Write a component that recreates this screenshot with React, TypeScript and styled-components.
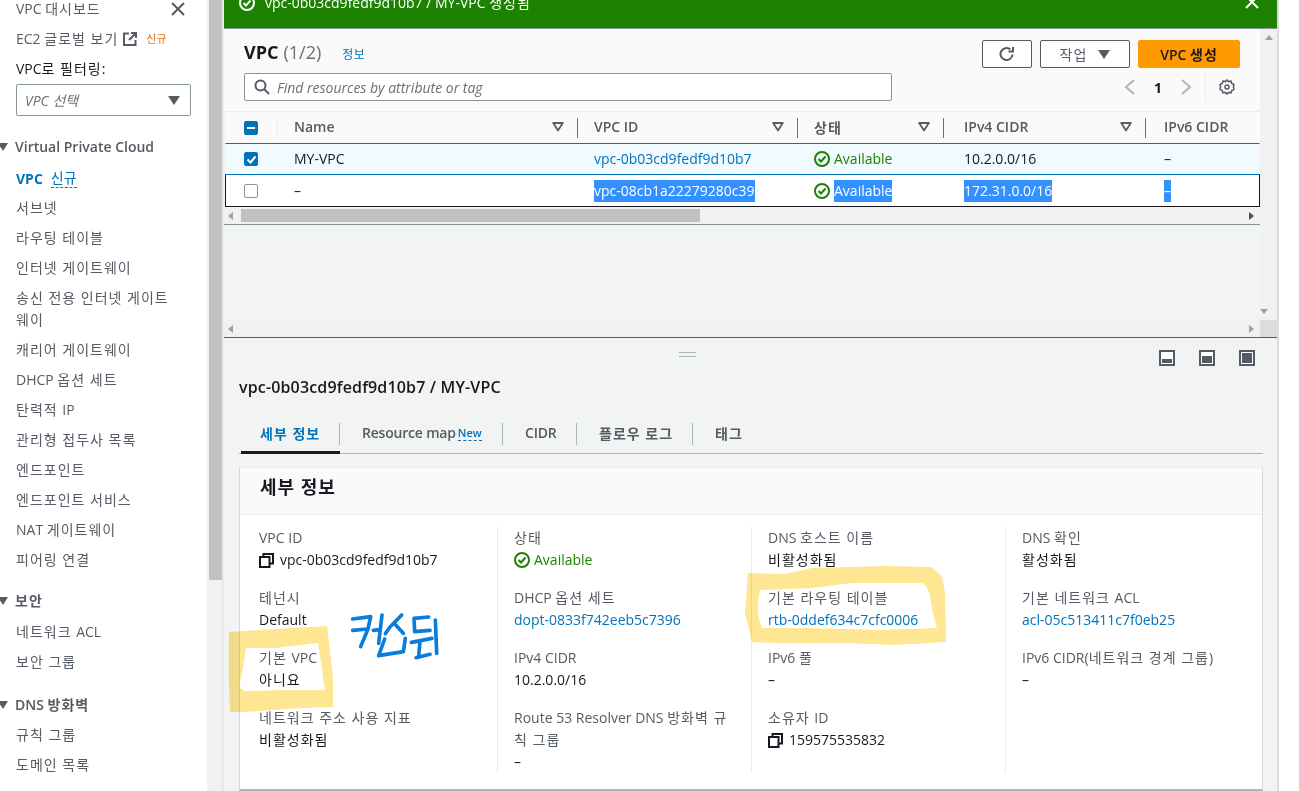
import React from "react";
import styled, { createGlobalStyle } from "styled-components";

const Global = createGlobalStyle`
  html, body { margin: 0; padding: 0; background: #fff; }
  body { font-family: "Open Sans", "Noto Sans CJK KR", sans-serif; font-size: 14px; color: #16191f; }
  * { box-sizing: border-box; }
`;

const Ko = styled.span`
  letter-spacing: 1px;
`;
const T = ({ children }: { children: string }) => (
  <>
    {children.split(/([가-힣][가-힣 ]*)/).map((part, i) =>
      i % 2 === 1 ? <Ko key={i}>{part}</Ko> : part
    )}
  </>
);

const Page = styled.div`
  position: relative;
  display: flex;
  width: 1299px;
  height: 791px;
  overflow: hidden;
  background: #fff;
`;

/* ---------- sidebar ---------- */
const Sidebar = styled.nav`
  width: 207px;
  flex: none;
  padding: 0 0 0 16px;
  margin-top: -6px;
  color: #545b64;
`;
const NavRow = styled.div<{ $mt?: number }>`
  display: flex;
  align-items: center;
  height: 30px;
  margin-top: ${(p) => p.$mt ?? 0}px;
  line-height: 22px;
  white-space: pre;
`;
const DashRow = styled(NavRow)`
  justify-content: space-between;
  padding-right: 21px;
`;
const FilterLabel = styled(NavRow)`
  color: #16191f;
`;
const NewTag = styled.span`
  margin-left: 9px;
  font-size: 11px;
  color: #ec7211;
`;
const Wrapped = styled.div`
  width: 160px;
  padding: 4px 0;
  line-height: 22px;
`;
const Select = styled.div`
  display: flex;
  align-items: center;
  justify-content: space-between;
  width: 175px;
  height: 32px;
  padding: 0 10px 0 8px;
  border: 1px solid #879596;
  border-radius: 2px;
  font-style: italic;
  color: #687078;
`;
const Section = styled(NavRow)`
  margin-left: -1px;
  font-weight: 600;
  position: relative;
`;
const SectionArrow = styled.svg`
  position: absolute;
  left: -17px;
  top: 11px;
`;
const ActiveNav = styled(NavRow)`
  height: 29px;
  color: #0073bb;
  font-weight: 700;
`;
const NewLink = styled.span`
  margin-left: 8px;
  font-weight: 400;
  line-height: 18px;
  border-bottom: 1px dashed #0073bb;
`;
const SideScroll = styled.div`
  width: 15px;
  flex: none;
  padding-left: 2px;
  background: #f1f1f1;
`;
const SideThumb = styled.div`
  height: 580px;
  background: #c1c1c1;
`;
const Gutter = styled.div`
  width: 2px;
  flex: none;
  background: #e8e8e8;
`;

/* ---------- main ---------- */
const Main = styled.main`
  width: 1053px;
  flex: none;
  display: flex;
  flex-direction: column;
  background: #f2f3f3;
`;
const RightStrip = styled.div`
  flex: 1;
  background: #fff;
  border-left: 2px solid #d9dddd;
`;
const Banner = styled.div`
  flex: none;
  height: 29px;
  display: flex;
  justify-content: space-between;
  padding: 0 18px 0 15px;
  background: #1d8102;
  border-bottom: 1px solid #879596;
  color: #fff;
`;
const BannerText = styled.div`
  display: flex;
  align-items: center;
  gap: 10px;
  height: 22px;
  margin-top: -8px;
  line-height: 22px;
  white-space: pre;
`;
const BannerClose = styled.svg`
  margin-top: -5px;
`;
const TopPane = styled.section`
  flex: none;
  height: 309px;
  display: flex;
  border-bottom: 1px solid #545b64;
`;
const TopScrollArea = styled.div`
  flex: 1;
  min-width: 0;
  display: flex;
  flex-direction: column;
`;
const VScroll = styled.div`
  width: 17px;
  flex: none;
  display: flex;
  flex-direction: column;
  justify-content: space-between;
  align-items: center;
  background: #f1f1f1;
`;
const VArrowBox = styled.div`
  height: 17px;
  display: flex;
  align-items: center;
`;
const Corner = styled.div`
  height: 17px;
  width: 17px;
  background: #dcdcdc;
`;
const Header = styled.header`
  flex: none;
  height: 83px;
  padding: 11px 20px 0 20px;
  background: #fafafa;
  border-bottom: 1px solid #eaeded;
`;
const TitleRow = styled.div`
  display: flex;
  justify-content: space-between;
  align-items: center;
  height: 28px;
`;
const Title = styled.div`
  display: flex;
  align-items: baseline;
  margin-top: -5px;
  font-size: 18px;
  font-weight: 700;
`;
const Count = styled.span`
  margin-left: 5px;
  font-weight: 400;
  color: #687078;
`;
const InfoLink = styled.a`
  margin-left: 21px;
  font-size: 12px;
  font-weight: 400;
  letter-spacing: 0.5px;
  color: #0073bb;
`;
const Buttons = styled.div`
  display: flex;
  gap: 8px;
`;
const Button = styled.div<{ $w: number; $primary?: boolean }>`
  display: flex;
  align-items: center;
  justify-content: center;
  gap: 11px;
  width: ${(p) => p.$w}px;
  height: 28px;
  border: 1px solid ${(p) => (p.$primary ? "#ff9900" : "#545b64")};
  border-radius: 2px;
  background: ${(p) => (p.$primary ? "#ff9900" : "#fff")};
  color: ${(p) => (p.$primary ? "#16191f" : "#545b64")};
  font-weight: ${(p) => (p.$primary ? 600 : 400)};
  white-space: pre;
`;
const SearchRow = styled.div`
  display: flex;
  justify-content: space-between;
  align-items: center;
  height: 28px;
  margin-top: 5px;
`;
const Search = styled.div`
  display: flex;
  align-items: center;
  gap: 7px;
  width: 648px;
  height: 28px;
  padding-left: 9px;
  background: #fff;
  border: 1px solid #879596;
  border-radius: 2px;
  font-style: italic;
  color: #687078;
`;
const Pager = styled.div`
  display: flex;
  align-items: center;
  margin-right: 5px;
  height: 28px;
`;
const PagerNum = styled.span`
  width: 44px;
  text-align: center;
  font-weight: 700;
  color: #16191f;
`;
const PagerDivider = styled.div`
  width: 1px;
  height: 28px;
  margin: 0 13px 0 13px;
  background: #eaeded;
`;
const Table = styled.div`
  flex: none;
  margin-left: 1px;
`;
const HeadRow = styled.div`
  display: grid;
  grid-template-columns: 53px 300px 220px 146px 202px 1fr;
  height: 31px;
  background: #fafafa;
`;
const HeadCell = styled.div<{ $pad?: number; $noSep?: boolean }>`
  position: relative;
  display: flex;
  align-items: center;
  justify-content: space-between;
  padding: 0 14px 2px ${(p) => p.$pad ?? 16}px;
  font-weight: 600;
  color: #545b64;
  white-space: nowrap;
  &::after {
    content: "";
    display: ${(p) => (p.$noSep ? "none" : "block")};
    position: absolute;
    right: 0;
    top: 6px;
    height: 20px;
    width: 1px;
    background: #687078;
  }
`;
const CheckHead = styled.div`
  position: relative;
  display: flex;
  align-items: center;
  padding-left: 19px;
  &::after {
    content: "";
    position: absolute;
    right: 0;
    top: 6px;
    height: 20px;
    width: 1px;
    background: #eaeded;
  }
`;
const BodyRow = styled.div<{ $selected?: boolean }>`
  display: grid;
  grid-template-columns: 52px 300px 220px 146px 202px 1fr;
  align-items: center;
  height: ${(p) => (p.$selected ? 32 : 33)}px;
  margin-top: ${(p) => (p.$selected ? 0 : -1)}px;
  background: ${(p) => (p.$selected ? "#f1faff" : "#fff")};
  border-top: 1px solid #0073bb;
  border-bottom: 1px solid ${(p) => (p.$selected ? "#0073bb" : "#16191f")};
  border-left: 1px solid ${(p) => (p.$selected ? "transparent" : "#16191f")};
  border-right: 1px solid ${(p) => (p.$selected ? "transparent" : "#16191f")};
  white-space: nowrap;
`;
const BodyCell = styled.div<{ $pad?: number; $link?: boolean }>`
  display: flex;
  align-items: center;
  padding-left: ${(p) => p.$pad ?? 16}px;
  line-height: 22px;
  color: ${(p) => (p.$link ? "#0073bb" : "#16191f")};
`;
const CheckCell = styled.div`
  padding-left: 18px;
  display: flex;
`;
const Selected = styled.span`
  display: inline-block;
  height: 22px;
  line-height: 22px;
  background: #3390ff;
  color: #fff;
`;
const StatusText = styled.span`
  margin-left: 4px;
  color: #1d8102;
`;
const Box = styled.div<{ $on?: boolean }>`
  width: 14px;
  height: 14px;
  border-radius: 2px;
  display: flex;
  align-items: center;
  justify-content: center;
  background: ${(p) => (p.$on ? "#0073bb" : "#fff")};
  border: 1px solid ${(p) => (p.$on ? "#0073bb" : "#879596")};
`;
const HScroll = styled.div`
  flex: none;
  display: flex;
  align-items: center;
  justify-content: space-between;
  height: 17px;
  padding: 0 6px 0 4px;
  background: #f1f1f1;
`;
const HThumbTrack = styled.div`
  flex: 1;
  padding: 0 0 0 8px;
`;
const HThumb = styled.div`
  width: 459px;
  height: 13px;
  background: #c1c1c1;
`;
const TableRule = styled.div`
  flex: none;
  height: 1px;
  background: #879596;
`;
const EmptySpace = styled.div`
  flex: 1;
`;

/* ---------- split panel ---------- */
const Split = styled.section`
  flex: 1;
  min-height: 0;
  padding: 0 14px 0 15px;
`;
const SplitTop = styled.div`
  display: flex;
  justify-content: space-between;
  align-items: center;
  height: 37px;
  padding: 2px 8px 0 440px;
`;
const Grip = styled.div`
  width: 17px;
  height: 5px;
  margin-top: -6px;
  border-top: 1px solid #aab7b8;
  border-bottom: 1px solid #aab7b8;
`;
const ViewIcons = styled.div`
  display: flex;
  gap: 24px;
`;
const PaneTitle = styled.h2`
  margin: 0;
  height: 24px;
  font-size: 16px;
  line-height: 24px;
  font-weight: 600;
  letter-spacing: 0.15px;
  color: #16191f;
`;
const Tabs = styled.div`
  display: flex;
  height: 33px;
  margin-top: 22px;
  padding-left: 2px;
  border-bottom: 1px solid #aab7b8;
`;
const Tab = styled.div<{ $w: number; $active?: boolean; $last?: boolean }>`
  position: relative;
  display: flex;
  align-items: center;
  width: ${(p) => p.$w}px;
  height: 33px;
  padding: 0 0 ${(p) => (p.$active ? 7 : 10)}px ${(p) => (p.$active ? 19 : 22)}px;
  font-weight: 600;
  letter-spacing: -0.2px;
  white-space: pre;
  color: ${(p) => (p.$active ? "#0073bb" : "#545b64")};
  border-bottom: ${(p) => (p.$active ? "3px solid #16191f" : "none")};
  &::after {
    content: "";
    display: ${(p) => (p.$last ? "none" : "block")};
    position: absolute;
    right: 0;
    top: 2px;
    height: 22px;
    width: 1px;
    background: #aab7b8;
  }
`;
const TabNew = styled.span`
  margin-left: 2px;
  font-size: 11px;
  letter-spacing: 0;
  color: #0073bb;
  line-height: 15px;
  border-bottom: 1px dashed #0073bb;
`;
const Card = styled.div`
  margin-top: 13px;
  height: 324px;
  background: #fff;
  border-top: 1px solid #eaeded;
  border-bottom: 2px solid #aab7b8;
  border-left: 1px solid #d5dbdb;
  border-right: 1px solid #d5dbdb;
`;
const CardHead = styled.div`
  display: flex;
  align-items: center;
  height: 47px;
  padding: 0 0 10px 20px;
  background: #fafafa;
  border-bottom: 1px solid #eaeded;
  font-size: 18px;
  font-weight: 700;
  white-space: pre;
`;
const CardGrid = styled.div`
  display: grid;
  grid-template-columns: 257px 254px 254px 1fr;
  margin-top: 12px;
`;
const Col = styled.div<{ $first?: boolean }>`
  height: 246px;
  padding: 0 20px 0 ${(p) => (p.$first ? 19 : 16)}px;
  border-left: ${(p) => (p.$first ? "none" : "1px solid #eaeded")};
`;
const Field = styled.div`
  margin-bottom: 16px;
  line-height: 22px;
`;
const Label = styled.div`
  color: #545b64;
`;
const Value = styled.div<{ $link?: boolean }>`
  display: flex;
  align-items: center;
  min-height: 22px;
  color: ${(p) => (p.$link ? "#0073bb" : "#16191f")};
`;
const CopyWrap = styled.span`
  display: inline-flex;
  margin-right: 6px;
`;
const Overlay = styled.svg`
  position: absolute;
  left: 0;
  top: 0;
  pointer-events: none;
  mix-blend-mode: multiply;
`;
const Scribble = styled.svg`
  position: absolute;
  left: 340px;
  top: 605px;
  pointer-events: none;
`;

/* ---------- icons ---------- */
const Tri = ({ c = "#545b64", w = 12 }: { c?: string; w?: number }) => (
  <svg width={w} height={(w * 2) / 3 + 1} viewBox="0 0 12 9"><path d="M0 0h12L6 9z" fill={c} /></svg>
);
const FilterIcon = () => (
  <svg width="12" height="10" viewBox="0 0 12 10" fill="none"><path d="M1.2 1h9.6L6 8.4z" stroke="#545b64" strokeWidth="1.8" strokeLinejoin="round" /></svg>
);
const Check = ({ c = "#1d8102" }: { c?: string }) => (
  <svg width="16" height="16" viewBox="0 0 16 16" fill="none" stroke={c} strokeWidth="2">
    <circle cx="8" cy="8" r="7" />
    <path d="M4.5 8l2.5 2.5 4.5-5" />
  </svg>
);
const Copy = () => (
  <svg width="15" height="15" viewBox="0 0 15 15" fill="none" stroke="#16191f" strokeWidth="2">
    <path d="M4.5 3.5V1h9.5v9.5h-3" />
    <rect x="1" y="4" width="9.5" height="10" />
  </svg>
);
const ViewIcon = ({ fill }: { fill: number }) => (
  <svg width="16" height="16" viewBox="0 0 16 16">
    <rect x="1" y="1" width="14" height="14" fill="#fff" stroke="#545b64" strokeWidth="2" />
    <rect x="3" y={13 - fill} width="10" height={fill} fill="#545b64" />
  </svg>
);
const SecArrow = () => (
  <SectionArrow width="10" height="8" viewBox="0 0 10 8"><path d="M0 0h10L5 8z" fill="#545b64" /></SectionArrow>
);

const navA = ["서브넷", "라우팅 테이블", "인터넷 게이트웨이"];
const navB = ["캐리어 게이트웨이", "DHCP 옵션 세트", "탄력적 IP", "관리형 접두사 목록", "엔드포인트", "엔드포인트 서비스", "NAT 게이트웨이", "피어링 연결"];

type F = { l: string; v: React.ReactNode; link?: boolean };
const cols: F[][] = [
  [
    { l: "VPC ID", v: <><CopyWrap><Copy /></CopyWrap>vpc-0b03cd9fedf9d10b7</> },
    { l: "테넌시", v: "Default" },
    { l: "기본 VPC", v: "아니요" },
    { l: "네트워크 주소 사용 지표", v: "비활성화됨" },
  ],
  [
    { l: "상태", v: <><Check /><StatusText>Available</StatusText></> },
    { l: "DHCP 옵션 세트", v: "dopt-0833f742eeb5c7396", link: true },
    { l: "IPv4 CIDR", v: "10.2.0.0/16" },
    { l: "Route 53 Resolver DNS 방화벽 규칙 그룹", v: "–" },
  ],
  [
    { l: "DNS 호스트 이름", v: "비활성화됨" },
    { l: "기본 라우팅 테이블", v: "rtb-0ddef634c7cfc0006", link: true },
    { l: "IPv6 풀", v: "–" },
    { l: "소유자 ID", v: <><CopyWrap><Copy /></CopyWrap>159575535832</> },
  ],
  [
    { l: "DNS 확인", v: "활성화됨" },
    { l: "기본 네트워크 ACL", v: "acl-05c513411c7f0eb25", link: true },
    { l: "IPv6 CIDR(네트워크 경계 그룹)", v: "–" },
  ],
];

export default function App() {
  return (
    <Page>
      <Global />
      <Sidebar>
        <DashRow>
          <span><T>VPC 대시보드</T></span>
          <svg width="16" height="16" viewBox="0 0 16 16" stroke="#545b64" strokeWidth="2"><path d="M2 2l12 12M14 2L2 14" /></svg>
        </DashRow>
        <NavRow>
          <T>EC2 글로벌 보기</T>
          <svg style={{ marginLeft: 5 }} width="14" height="14" viewBox="0 0 14 14" fill="none" stroke="#545b64" strokeWidth="2"><path d="M6 1.500H1v11.500h11.500V8M6 8l7-7M8 1h5v5" /></svg>
          <NewTag>신규</NewTag>
        </NavRow>
        <FilterLabel><T>VPC로 필터링:</T></FilterLabel>
        <Select>VPC 선택<Tri /></Select>
        <Section $mt={16}><SecArrow />Virtual Private Cloud</Section>
        <ActiveNav $mt={2}>VPC<NewLink>신규</NewLink></ActiveNav>
        {navA.map((n) => <NavRow key={n}><T>{n}</T></NavRow>)}
        <Wrapped><Ko>송신 전용 인터넷 게이트웨이</Ko></Wrapped>
        {navB.map((n) => <NavRow key={n}><T>{n}</T></NavRow>)}
        <Section $mt={11}><SecArrow /><T>보안</T></Section>
        <NavRow $mt={1}><T>네트워크 ACL</T></NavRow>
        <NavRow><T>보안 그룹</T></NavRow>
        <Section $mt={13}><SecArrow /><T>DNS 방화벽</T></Section>
        <NavRow><T>규칙 그룹</T></NavRow>
        <NavRow><T>도메인 목록</T></NavRow>
      </Sidebar>
      <SideScroll><SideThumb /></SideScroll>
      <Gutter />
      <Main>
        <Banner>
          <BannerText>
            <Check c="#fff" />
            <span><T>vpc-0b03cd9fedf9d10b7 / MY-VPC 생성됨</T></span>
          </BannerText>
          <BannerClose width="14" height="14" viewBox="0 0 14 14" stroke="#fff" strokeWidth="2"><path d="M1 1l12 12M13 1L1 13" /></BannerClose>
        </Banner>
        <TopPane>
          <TopScrollArea>
            <Header>
              <TitleRow>
                <Title>VPC<Count>(1/2)</Count><InfoLink>정보</InfoLink></Title>
                <Buttons>
                  <Button $w={50}>
                    <svg width="16" height="16" viewBox="0 0 16 16" fill="none" stroke="#545b64" strokeWidth="2"><path d="M13.500 8.500a6 6 0 1 1-2.200-5.100" /><path d="M14 1v4.500H9.500" /></svg>
                  </Button>
                  <Button $w={90}><Ko>작업</Ko><Tri /></Button>
                  <Button $w={102} $primary><span><T>VPC 생성</T></span></Button>
                </Buttons>
              </TitleRow>
              <SearchRow>
                <Search>
                  <svg width="16" height="16" viewBox="0 0 16 16" fill="none" stroke="#545b64" strokeWidth="2"><circle cx="6.500" cy="6.500" r="5" /><path d="M10 10l5 5" /></svg>
                  Find resources by attribute or tag
                </Search>
                <Pager>
                  <svg width="12" height="16" viewBox="0 0 12 16" fill="none" stroke="#aab7b8" strokeWidth="2"><path d="M10 1L2 8l8 7" /></svg>
                  <PagerNum>1</PagerNum>
                  <svg width="12" height="16" viewBox="0 0 12 16" fill="none" stroke="#aab7b8" strokeWidth="2"><path d="M2 1l8 7-8 7" /></svg>
                  <PagerDivider />
                  <svg width="16" height="16" viewBox="0 0 16 16" fill="none" stroke="#545b64" strokeWidth="1.500"><circle cx="8" cy="8" r="2" /><path d="M8 1l1.600 1.600 2.400-.4.8 2.200 2.200 1.200-.6 2.400.6 2.400-2.200 1.200-.8 2.200-2.400-.4L8 15l-1.600-1.600-2.400.4-.8-2.200L1 10.400 1.600 8 1 5.600l2.200-1.200L4 2.200l2.400.4z" /></svg>
                </Pager>
              </SearchRow>
            </Header>
            <Table>
              <HeadRow>
                <CheckHead>
                  <Box $on><svg width="10" height="10" viewBox="0 0 10 10"><path d="M1 5h8" stroke="#fff" strokeWidth="2" /></svg></Box>
                </CheckHead>
                <HeadCell>Name<FilterIcon /></HeadCell>
                <HeadCell>VPC ID<FilterIcon /></HeadCell>
                <HeadCell><Ko>상태</Ko><FilterIcon /></HeadCell>
                <HeadCell $pad={20}>IPv4 CIDR<FilterIcon /></HeadCell>
                <HeadCell $pad={18} $noSep>IPv6 CIDR</HeadCell>
              </HeadRow>
              <BodyRow $selected>
                <CheckCell>
                  <Box $on><svg width="11" height="11" viewBox="0 0 11 11" fill="none"><path d="M1.500 5.500l3 3 5-6" stroke="#fff" strokeWidth="2" /></svg></Box>
                </CheckCell>
                <BodyCell>MY-VPC</BodyCell>
                <BodyCell $link>vpc-0b03cd9fedf9d10b7</BodyCell>
                <BodyCell><Check /><StatusText>Available</StatusText></BodyCell>
                <BodyCell $pad={20}>10.2.0.0/16</BodyCell>
                <BodyCell $pad={18}>–</BodyCell>
              </BodyRow>
              <BodyRow>
                <CheckCell><Box /></CheckCell>
                <BodyCell>–</BodyCell>
                <BodyCell><Selected>vpc-08cb1a22279280c39</Selected></BodyCell>
                <BodyCell><Check /><StatusText><Selected>Available</Selected></StatusText></BodyCell>
                <BodyCell $pad={20}><Selected>172.31.0.0/16</Selected></BodyCell>
                <BodyCell $pad={18}><Selected>–</Selected></BodyCell>
              </BodyRow>
            </Table>
            <HScroll>
              <svg width="5" height="8" viewBox="0 0 5 8"><path d="M5 0v8L0 4z" fill="#a0a0a0" /></svg>
              <HThumbTrack><HThumb /></HThumbTrack>
              <svg width="5" height="8" viewBox="0 0 5 8"><path d="M0 0v8l5-4z" fill="#505050" /></svg>
            </HScroll>
            <TableRule />
            <EmptySpace />
            <HScroll>
              <svg width="5" height="8" viewBox="0 0 5 8"><path d="M5 0v8L0 4z" fill="#a0a0a0" /></svg>
              <svg width="5" height="8" viewBox="0 0 5 8"><path d="M0 0v8l5-4z" fill="#a0a0a0" /></svg>
            </HScroll>
          </TopScrollArea>
          <VScroll>
            <VArrowBox><svg width="8" height="5" viewBox="0 0 8 5"><path d="M0 5h8L4 0z" fill="#a0a0a0" /></svg></VArrowBox>
            <div>
              <VArrowBox><svg width="8" height="5" viewBox="0 0 8 5"><path d="M0 0h8L4 5z" fill="#a0a0a0" /></svg></VArrowBox>
              <Corner />
            </div>
          </VScroll>
        </TopPane>
        <Split>
          <SplitTop>
            <Grip />
            <ViewIcons>
              <ViewIcon fill={4} />
              <ViewIcon fill={7} />
              <ViewIcon fill={10} />
            </ViewIcons>
          </SplitTop>
          <PaneTitle>vpc-0b03cd9fedf9d10b7 / MY-VPC</PaneTitle>
          <Tabs>
            <Tab $w={99} $active><Ko>세부 정보</Ko></Tab>
            <Tab $w={163}>Resource map<TabNew>New</TabNew></Tab>
            <Tab $w={74}>CIDR</Tab>
            <Tab $w={116}><Ko>플로우 로그</Ko></Tab>
            <Tab $w={80} $last><Ko>태그</Ko></Tab>
          </Tabs>
          <Card>
            <CardHead><Ko>세부 정보</Ko></CardHead>
            <CardGrid>
              {cols.map((c, i) => (
                <Col key={i} $first={i === 0}>
                  {c.map((f) => (
                    <Field key={f.l}>
                      <Label><T>{f.l}</T></Label>
                      <Value $link={f.link}>
                        {typeof f.v === "string" ? <span><T>{f.v}</T></span> : f.v}
                      </Value>
                    </Field>
                  ))}
                </Col>
              ))}
            </CardGrid>
          </Card>
        </Split>
      </Main>
      <RightStrip />
      <Overlay width="1299" height="791" viewBox="0 0 1299 791">
        <path fillRule="evenodd" fill="#ffe692" d="M229 632L275 629L327 626L333 677L333 707L302 708L245 712L230 712Q228 670 229 632ZM246 648L275 648L318 643L325 690L292 690L245 691Q238 688 240 683Q244 665 246 648Z" />
        <path fillRule="evenodd" fill="#ffe692" d="M748 573L785 574L812 568L885 566L932 567L942 577L945 593L946 642L895 645L845 643L778 643L752 642L745 613L747 587ZM760 590L812 588L852 583L922 583Q928 586 930 596L932 610L937 628L878 630L812 628L762 628Q755 612 760 590Z" />
      </Overlay>
      <Scribble width="110" height="60" viewBox="0 0 330 180" fill="none" stroke="#0a7ddc" strokeWidth="11" strokeLinecap="round" strokeLinejoin="round">
        <path d="M38 42L92 35L84 72L62 125M38 76L82 72M100 76L118 74M126 30L116 115" />
        <path d="M185 30L150 66L136 86M165 58L190 85M134 102L116 152L190 140L196 100" />
        <path d="M222 40L266 36M222 40L224 80L270 76M214 112L276 100M240 108L236 155M228 158L270 148M286 45L290 145" />
      </Scribble>
    </Page>
  );
}
